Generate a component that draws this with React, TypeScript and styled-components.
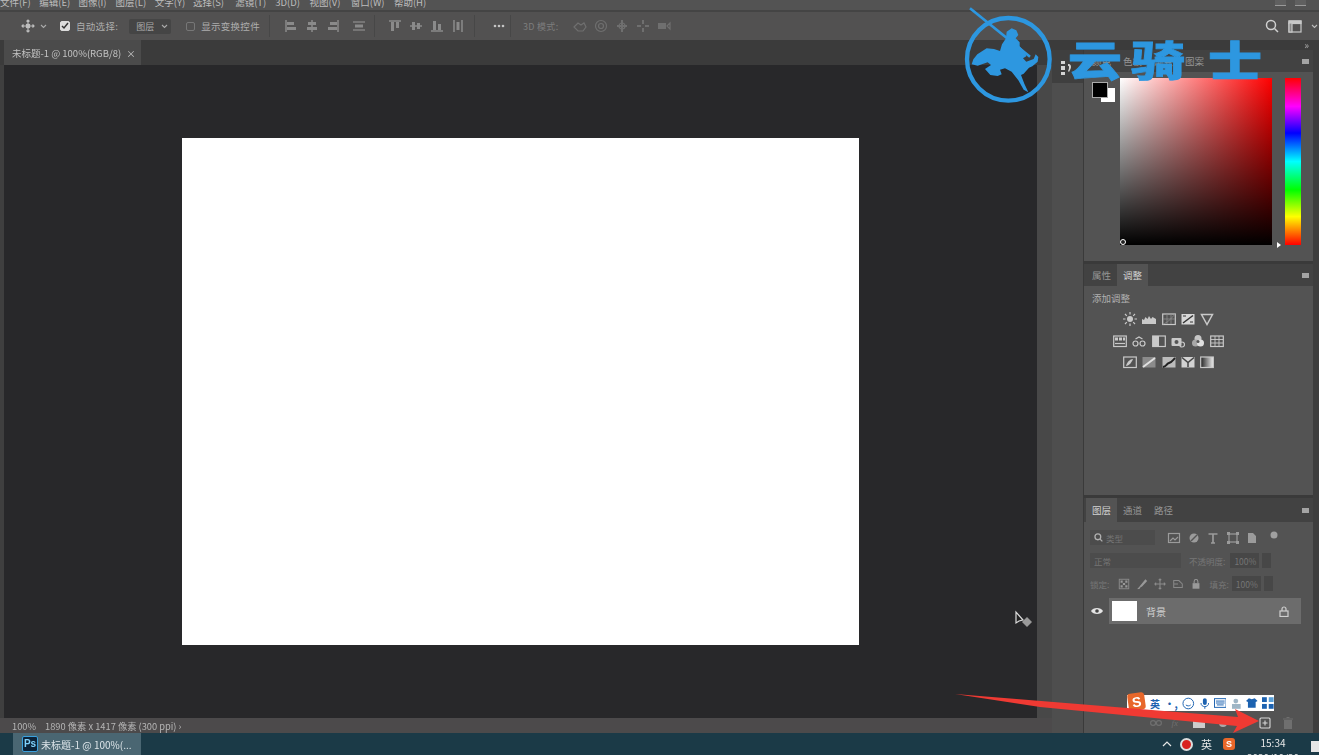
import React from "react";
import styled, { createGlobalStyle } from "styled-components";

const Global = createGlobalStyle`
  html, body { margin: 0; padding: 0; background: #28282a; overflow: hidden; }
  * { box-sizing: border-box; }
`;

const Shell = styled.div`
  position: relative;
  width: 1319px;
  height: 755px;
  display: flex;
  flex-direction: column;
  overflow: hidden;
  font-family: "Noto Sans CJK SC", "Liberation Sans", sans-serif;
  font-size: 9px;
  color: #c4c4c4;
`;
const Blurred = styled.div`
  display: flex;
  flex-direction: column;
  width: 100%;
  height: 100%;
  filter: blur(0.45px);
`;

/* menu */
const MenuBar = styled.div`
  height: 12px;
  flex: none;
  background: #535353;
  border-bottom: 2px solid #444;
  display: flex;
  align-items: flex-end;
  overflow: hidden;
  position: relative;
`;
const MenuItems = styled.div`
  display: flex;
  gap: 9.2px;
  height: 10px;
  line-height: 10px;
  margin-top: -3px;
  align-self: flex-start;
  font-size: 9.5px;
  color: #bdbdbd;
  white-space: nowrap;
`;
const MenuItem = styled.span<{ $w: number }>`
  width: ${(p) => p.$w}px;
`;
const WinBtns = styled.div`
  margin-left: auto;
  display: flex;
  gap: 9px;
  align-self: flex-start;
  padding-right: 13px;
`;
const WinBtn = styled.div`
  width: 11px;
  height: 6px;
  background: #606060;
  border-bottom: 1px solid #999;
`;

/* options */
const OptionsBar = styled.div`
  height: 28px;
  flex: none;
  background: #525151;
  display: flex;
  align-items: center;
  padding-left: 21px;
  color: #aaa;
  white-space: nowrap;
`;
const OptGroup = styled.div<{ $gap?: number; $left?: number }>`
  display: flex;
  align-items: center;
  gap: ${(p) => p.$gap ?? 8}px;
  margin-left: ${(p) => p.$left ?? 0}px;
`;
const Sep = styled.div<{ $left: number }>`
  width: 1px;
  height: 22px;
  background: #474747;
  margin-left: ${(p) => p.$left}px;
`;
const Check = styled.div<{ $on?: boolean }>`
  width: ${(p) => (p.$on ? 10 : 9)}px;
  height: ${(p) => (p.$on ? 10 : 9)}px;
  border-radius: 2px;
  background: ${(p) => (p.$on ? "#dcdcdc" : "transparent")};
  border: 1px solid ${(p) => (p.$on ? "#dcdcdc" : "#777")};
  display: flex;
  align-items: center;
  justify-content: center;
`;
const SelectBox = styled.div`
  width: 42px;
  height: 15px;
  background: #454545;
  border-radius: 2px;
  display: flex;
  align-items: center;
  justify-content: space-between;
  padding: 0 3px 0 7px;
  color: #aaa;
`;
const OptLabel = styled.span<{ $dim?: boolean }>`
  font-size: ${(p) => (p.$dim ? 9 : 9.5)}px;
  color: ${(p) => (p.$dim ? "#7d7d7d" : "#adadad")};
  letter-spacing: 0.3px;
`;
const RightTools = styled.div`
  margin-left: auto;
  display: flex;
  align-items: center;
  gap: 9px;
  padding-right: 1px;
`;
const WideIcon = styled.div`
  margin-left: 5px;
`;

/* workspace */
const Workspace = styled.div`
  flex: 1;
  display: flex;
  min-height: 0;
`;
const DocColumn = styled.div`
  width: 1052px;
  flex: none;
  display: flex;
  flex-direction: column;
`;
const TabRow = styled.div`
  height: 25px;
  flex: none;
  background: #3b3b3b;
  padding-left: 4px;
  display: flex;
`;
const DocTab = styled.div`
  width: 137px;
  background: #4b4b4b;
  display: flex;
  align-items: center;
  padding-left: 8px;
  gap: 5px;
  color: #c2c2c2;
  font-size: 9.5px;
  white-space: nowrap;
`;
const CanvasRow = styled.div`
  flex: 1;
  display: flex;
  min-height: 0;
`;
const CanvasArea = styled.div`
  flex: 1;
  background: #28282a;
  border-left: 4px solid #3f3f3f;
  padding: 73px 0 0 178px;
`;
const Page = styled.div`
  width: 677px;
  height: 507px;
  background: #fff;
`;
const VScroll = styled.div`
  width: 15px;
  background: #484848;
`;
const StatusBar = styled.div`
  height: 15px;
  flex: none;
  background: #4c4a4b;
  display: flex;
  align-items: center;
  padding-left: 12px;
  gap: 9px;
  color: #b5b5b5;
  white-space: nowrap;
  font-size: 9.3px;
`;

/* dock */
const Dock = styled.div`
  flex: 1;
  background: #3d3d3d;
  display: flex;
  flex-direction: column;
`;
const DockTop = styled.div`
  height: 10px;
  flex: none;
  background: #3b3b3b;
  display: flex;
  justify-content: flex-end;
  align-items: center;
  padding-right: 10px;
  color: #aaa;
  font-size: 10px;
  line-height: 10px;
`;
const DockBody = styled.div`
  flex: 1;
  display: flex;
  min-height: 0;
`;
const MiniCol = styled.div`
  width: 32px;
  background: #4e4e4e;
  border-right: 1px solid #3a3a3a;
  display: flex;
  flex-direction: column;
`;
const MiniHead = styled.div`
  height: 33px;
  flex: none;
  background: #3f3f3f;
  padding: 11px 0 0 9px;
`;
const Panels = styled.div`
  width: 229px;
  display: flex;
  flex-direction: column;
  gap: 3px;
  background: #3a3a3a;
`;
const Panel = styled.div<{ $h?: number }>`
  background: #535353;
  display: flex;
  flex-direction: column;
  ${(p) => (p.$h ? `height: ${p.$h}px; flex: none;` : "flex: 1;")}
`;
const PanelHead = styled.div<{ $h: number }>`
  height: ${(p) => p.$h}px;
  flex: none;
  background: #424242;
  display: flex;
  align-items: stretch;
  padding-left: 2px;
  position: relative;
`;
const PanelTab = styled.div<{ $on?: boolean }>`
  padding: 0 6px;
  display: flex;
  align-items: center;
  background: ${(p) => (p.$on ? "#535353" : "transparent")};
  color: ${(p) => (p.$on ? "#d2d2d2" : "#959595")};
  font-size: 9.5px;
`;
const PanelMenu = styled.div`
  margin-left: auto;
  align-self: center;
  margin-right: 4px;
  width: 7px;
  height: 5px;
  background: #a4a4a4;
`;

const ColorBody = styled.div`
  flex: 1;
  display: flex;
  padding: 6px 0 0 9px;
  position: relative;
`;
const Swatches = styled.div`
  position: relative;
  width: 27px;
  height: 28px;
  flex: none;
`;
const Bg = styled.div`
  position: absolute;
  left: 8px;
  top: 10px;
  width: 14px;
  height: 14px;
  background: #fff;
`;
const Fg = styled.div`
  position: absolute;
  left: 0;
  top: 5px;
  width: 14px;
  height: 14px;
  background: #000;
  outline: 1px solid #aaa;
`;
const Picker = styled.div`
  width: 152px;
  height: 167px;
  background:
    linear-gradient(to top, #000, rgba(0, 0, 0, 0)),
    linear-gradient(to right, #fff, #f00);
`;
const Hue = styled.div`
  width: 16px;
  height: 167px;
  margin-left: 13px;
  background: linear-gradient(
    to bottom,
    #f00 0%,
    #f0f 17%,
    #00f 33%,
    #0ff 50%,
    #0f0 67%,
    #ff0 83%,
    #f00 100%
  );
`;
const PickerMark = styled.div`
  position: absolute;
  left: 36px;
  top: 167px;
  width: 6px;
  height: 6px;
  border-radius: 50%;
  border: 1px solid #fff;
  background: #222;
`;
const HueMark = styled.div`
  position: absolute;
  left: 193px;
  top: 170px;
  width: 0;
  height: 0;
  border-top: 3px solid transparent;
  border-bottom: 3px solid transparent;
  border-left: 4px solid #fff;
`;

const AdjBody = styled.div`
  flex: 1;
  padding: 6px 8px;
`;
const AdjTitle = styled.div`
  color: #b0b0b0;
  font-size: 9.5px;
  line-height: 12px;
`;
const AdjGrid = styled.div`
  margin: 8px 0 0 18px;
  width: 117px;
  display: flex;
  flex-direction: column;
  gap: 7.5px;
`;
const AdjRow = styled.div`
  display: flex;
  justify-content: center;
  gap: 5.4px;
`;

const FilterRow = styled.div<{ $top?: number }>`
  height: 23px;
  flex: none;
  margin-top: ${(p) => p.$top ?? 0}px;
  display: flex;
  align-items: center;
  padding-left: 6px;
  color: #777;
  font-size: 8.5px;
  white-space: nowrap;
`;
const FieldBox = styled.div<{ $w: number; $left?: number; $deep?: boolean }>`
  width: ${(p) => p.$w}px;
  height: 15px;
  margin-left: ${(p) => p.$left ?? 0}px;
  background: ${(p) => (p.$deep ? "#474747" : "#4c4c4c")};
  display: flex;
  align-items: center;
  gap: 3px;
  padding: 0 4px;
  color: #757575;
  font-size: 8.5px;
`;
const FieldLabel = styled.span<{ $left?: number }>`
  margin-left: ${(p) => p.$left ?? 0}px;
  color: #777;
`;
const IconSet = styled.div<{ $left: number; $gap: number }>`
  display: flex;
  align-items: center;
  gap: ${(p) => p.$gap}px;
  margin-left: ${(p) => p.$left}px;
`;
const LayerRow = styled.div`
  height: 26px;
  flex: none;
  display: flex;
  align-items: center;
  margin-top: 3px;
`;
const EyeCell = styled.div`
  width: 25px;
  display: flex;
  justify-content: center;
`;
const LayerBody = styled.div`
  width: 192px;
  height: 26px;
  background: #6c6c6c;
  display: flex;
  align-items: center;
  padding: 0 12px 0 3px;
  color: #d0d0d0;
  font-size: 10px;
`;
const Thumb = styled.div`
  width: 25px;
  height: 20px;
  background: #fff;
  margin-right: 9px;
`;
const LayersFill = styled.div`
  flex: 1;
`;
const LayersFooter = styled.div`
  height: 21px;
  flex: none;
  display: flex;
  align-items: center;
  justify-content: flex-end;
  gap: 10px;
  padding-right: 20px;
  color: #777;
  font-size: 9px;
`;
const FxText = styled.span`
  font-style: italic;
  font-family: "Liberation Serif", serif;
  color: #6f6f6f;
`;

/* taskbar */
const Taskbar = styled.div`
  height: 22px;
  flex: none;
  background: #1b3a47;
  display: flex;
  align-items: stretch;
  padding-left: 13px;
`;
const TaskBtn = styled.div`
  width: 128px;
  background: #4a6672;
  display: flex;
  align-items: center;
  padding-left: 9px;
  gap: 3px;
  color: #dce4e8;
  font-size: 10px;
  white-space: nowrap;
  overflow: hidden;
`;
const PsIcon = styled.div`
  width: 16px;
  height: 16px;
  background: #0b2238;
  border: 1px solid #3aa0dd;
  border-radius: 2px;
  color: #7fd0fa;
  font: bold 10px/14px "Liberation Sans", sans-serif;
  text-align: center;
`;
const Tray = styled.div`
  margin-left: auto;
  display: flex;
  align-items: center;
  color: #e8e8e8;
  position: relative;
`;
const TrayRec = styled.div`
  width: 13px;
  height: 13px;
  border-radius: 50%;
  border: 2px solid #ddd;
  background: #d8201e;
  margin-left: 8px;
`;
const TrayLang = styled.span`
  font-size: 11px;
  margin-left: 8px;
`;
const TrayGap = styled.span`
  width: 11px;
`;
const SogouBadge = styled.div<{ $s: number }>`
  width: ${(p) => p.$s}px;
  height: ${(p) => p.$s}px;
  border-radius: 3px;
  background: #e8672a;
  color: #fff;
  font: bold ${(p) => p.$s - 3}px/1 "Liberation Sans", sans-serif;
  display: flex;
  align-items: center;
  justify-content: center;
  flex: none;
`;
const TrayClock = styled.div`
  width: 56px;
  margin-left: 10px;
  text-align: center;
  font-size: 10px;
  line-height: 15px;
  padding-top: 2px;
  align-self: flex-start;
  height: 22px;
  overflow: hidden;
`;
const TrayNote = styled.div`
  width: 8px;
  height: 11px;
  margin: 8px 0 0 10px;
  background: #e6e6e6;
  align-self: flex-start;
`;

/* overlays */
const Watermark = styled.div`
  position: absolute;
  left: 950px;
  top: 0;
  display: flex;
  align-items: flex-start;
`;
const WatermarkText = styled.div`
  position: absolute;
  left: 114px;
  top: 36px;
  display: flex;
  color: #2d97e0;
  font: 900 54px/58px "Noto Sans CJK SC", sans-serif;
  -webkit-text-stroke: 1px #2d97e0;
  white-space: nowrap;
  transform: scaleY(0.76);
  transform-origin: top left;
`;
const WatermarkChar = styled.span<{ $w: number }>`
  width: ${(p) => p.$w}px;
  text-align: center;
`;
const SogouBar = styled.div`
  position: absolute;
  left: 1127px;
  top: 695px;
  width: 147px;
  height: 16px;
  background: #fff;
  display: flex;
  align-items: center;
  padding-left: 23px;
  gap: 4.6px;
  color: #1c62b0;
  font-size: 10px;
  font-weight: 700;
`;
const SogouLogo = styled.div`
  position: absolute;
  left: 1128px;
  top: 693px;
  transform: rotate(-8deg);
`;
const Arrow = styled.svg`
  position: absolute;
  left: 950px;
  top: 690px;
`;
const Cursor = styled.svg`
  position: absolute;
  left: 1012px;
  top: 608px;
`;

/* icons */
const Svg = ({ s = 14, c = "#bdbdbd", children }: { s?: number; c?: string; children: React.ReactNode }) => (
  <svg width={s} height={s} viewBox="0 0 14 14" fill="none" stroke={c} strokeWidth="1.2" style={{ flex: "none", display: "block" }}>
    {children}
  </svg>
);
const Caret = ({ c = "#aaa" }: { c?: string }) => (
  <svg width="7" height="5" viewBox="0 0 7 5" fill="none" stroke={c} strokeWidth="1.1" style={{ flex: "none" }}>
    <path d="M1 1l2.5 2.5L6 1" />
  </svg>
);

const MoveIcon = () => (
  <Svg s={14}>
    <path d="M7 1v12M1 7h12M5.500 2.500L7 1l1.500 1.500M5.500 11.500L7 13l1.500-1.500M2.500 5.500L1 7l1.500 1.500M11.500 5.500L13 7l-1.500 1.500" />
    <rect x="5.500" y="5.500" width="3" height="3" fill="#bdbdbd" />
  </Svg>
);
const alignA = [
  <><path d="M2 1v12" /><rect x="3" y="3" width="7" height="3" fill="#8a8a8a" stroke="none" /><rect x="3" y="8" width="9" height="3" fill="#8a8a8a" stroke="none" /></>,
  <><path d="M7 1v12" /><rect x="3" y="3" width="8" height="3" fill="#8a8a8a" stroke="none" /><rect x="2" y="8" width="10" height="3" fill="#8a8a8a" stroke="none" /></>,
  <><path d="M12 1v12" /><rect x="4" y="3" width="7" height="3" fill="#8a8a8a" stroke="none" /><rect x="2" y="8" width="9" height="3" fill="#8a8a8a" stroke="none" /></>,
];
const alignSpread = <><path d="M1 3h12M1 11h12" /><rect x="3" y="5.500" width="8" height="3" fill="#8a8a8a" stroke="none" /></>;
const alignB = [
  <><path d="M1 2h12" /><rect x="3" y="3" width="3" height="9" fill="#8a8a8a" stroke="none" /><rect x="8" y="3" width="3" height="6" fill="#8a8a8a" stroke="none" /></>,
  <><path d="M1 7h12" /><rect x="3" y="3" width="3" height="8" fill="#8a8a8a" stroke="none" /><rect x="8" y="4" width="3" height="6" fill="#8a8a8a" stroke="none" /></>,
  <><path d="M1 12h12" /><rect x="3" y="2" width="3" height="9" fill="#8a8a8a" stroke="none" /><rect x="8" y="5" width="3" height="6" fill="#8a8a8a" stroke="none" /></>,
  <><path d="M3 1v12M11 1v12" /><rect x="5.500" y="3" width="3" height="8" fill="#8a8a8a" stroke="none" /></>,
];
const dim = "#6f6f6f";
const threeD = [
  <path d="M1 8l4-4 3 2 3-2 2 4-3 4H5z" stroke={dim} />,
  <><circle cx="7" cy="7" r="5.500" stroke={dim} /><circle cx="7" cy="7" r="2.500" stroke={dim} /></>,
  <><path d="M7 1v12M2 7h10" stroke={dim} strokeWidth="2" /><circle cx="7" cy="7" r="3" stroke={dim} /></>,
  <path d="M7 1v4M7 9v4M1 7h4M9 7h4" stroke={dim} strokeWidth="2" />,
  <><rect x="1" y="4" width="8" height="6" fill={dim} stroke="none" /><path d="M10 7l3-3v6z" stroke={dim} /></>,
];

const adj = (n: number) => {
  const w = "#c9c9c9";
  const boxed = (inner: React.ReactNode) => (
    <><rect x="0.700" y="2" width="12.600" height="10.500" stroke={w} />{inner}</>
  );
  const all: React.ReactNode[] = [
    <><circle cx="7" cy="7" r="3" fill={w} stroke="none" /><path d="M7 0v2.500M7 11.500V14M0 7h2.500M11.500 7H14M2 2l1.800 1.800M10.200 10.200L12 12M2 12l1.800-1.800M10.200 3.800L12 2" stroke={w} /></>,
    <path d="M0 12V7l2 1 1.500-3 2 2 1.500-3 2 3 1.500-2L14 7v5z" fill={w} stroke="none" />,
    boxed(<path d="M1 12C5 11 9 7 13 2M5 2v10M9 2v10M1 7h12" stroke="#8d8d8d" strokeWidth="0.8" />),
    <><rect x="0.500" y="2" width="13" height="10.500" fill="#d8d8d8" stroke="none" /><path d="M2 11L12 3.500" stroke="#333" strokeWidth="1.500" /><path d="M2 4h3M9 10h3" stroke="#333" /></>,
    <path d="M1.500 2.500h11L7 12.500z" stroke={w} strokeWidth="1.500" />,
    boxed(<><rect x="2" y="3.500" width="3" height="3" fill={w} stroke="none" /><rect x="6" y="3.500" width="3" height="3" fill={w} stroke="none" /><rect x="10" y="3.500" width="2" height="3" fill={w} stroke="none" /><path d="M2 9.500h10" stroke={w} /></>),
    <><circle cx="3.500" cy="9.500" r="2.500" stroke={w} /><circle cx="10.500" cy="9.500" r="2.500" stroke={w} /><path d="M3.500 5l3.500-2 3.500 2" stroke={w} /></>,
    <><rect x="0.700" y="2" width="12.600" height="10.500" stroke={w} /><rect x="0.700" y="2" width="6.300" height="10.500" fill={w} stroke="none" /></>,
    <><rect x="0.500" y="4" width="10" height="8" rx="1" fill={w} stroke="none" /><circle cx="5.500" cy="8" r="2" fill="#555" stroke="none" /><circle cx="11" cy="10.500" r="2.500" stroke={w} /></>,
    <><circle cx="7" cy="4.500" r="3.500" fill="#c6c6c6" stroke="none" /><circle cx="4.500" cy="9" r="3.500" fill="#a8a8a8" stroke="none" /><circle cx="9.500" cy="9" r="3.500" fill="#e0e0e0" stroke="none" /><circle cx="7" cy="7.500" r="1.500" fill="#555" stroke="none" /></>,
    boxed(<path d="M5 2v10.500M9 2v10.500M1 5.500h12M1 9h12" stroke={w} strokeWidth="0.900" />),
    <><rect x="0.700" y="2" width="12.600" height="10.500" stroke={w} /><path d="M3 11c3 0 6-4 7-7-3 0-6 3-7 7z" fill={w} stroke="none" /></>,
    <><rect x="0.500" y="2" width="13" height="10.500" fill="#8b8b8b" stroke="none" /><path d="M1 12L13 3" stroke="#e0e0e0" strokeWidth="2" /></>,
    <><rect x="0.500" y="2" width="13" height="10.500" fill="#bcbcbc" stroke="none" /><path d="M1 12c4-1 3-3 6-4s4-3 6-5" stroke="#222" strokeWidth="2" /></>,
    <><rect x="0.500" y="2" width="13" height="10.500" fill="#d2d2d2" stroke="none" /><path d="M1 2.500l6 5 6-5M7 7.500V12" stroke="#444" strokeWidth="1.500" /></>,
    <><defs><linearGradient id="adjg"><stop offset="0" stopColor="#222" /><stop offset="1" stopColor="#eee" /></linearGradient></defs><rect x="0.700" y="2" width="12.600" height="10.500" fill="url(#adjg)" stroke={w} /></>,
  ];
  return all[n];
};

const l = "#9b9b9b";
const filterIcons = [
  <><rect x="1.500" y="2.500" width="11" height="9" stroke={l} /><path d="M3 10l3-3 2 2 3-3" stroke={l} /></>,
  <><circle cx="7" cy="7" r="4.500" fill={l} stroke="none" /><path d="M4 10l6-6" stroke="#555" strokeWidth="1.500" /></>,
  <path d="M2.500 3h9M7 3v9M5 12h4" stroke={l} strokeWidth="1.700" />,
  <><rect x="3" y="3" width="8" height="8" stroke={l} /><path d="M1 1h3v3H1zM10 1h3v3h-3zM1 10h3v3H1zM10 10h3v3h-3z" fill={l} stroke="none" /></>,
  <path d="M3 2h5l3 3v7H3z M6 6h3v3H6z" fill={l} stroke="none" />,
];
const lockIcons = [
  <><rect x="1.500" y="1.500" width="11" height="11" stroke="#888" /><path d="M3 3h2.500v2.500H3zM8.500 3H11v2.500H8.500zM5.700 5.700h2.600v2.600H5.700zM3 8.500h2.500V11H3zM8.500 8.500H11V11H8.500z" fill="#999" stroke="none" /></>,
  <path d="M2 12.500c2 0 2.500-1 3-2.500L11 2.500l1 1L6 10" stroke="#999" strokeWidth="1.500" />,
  <path d="M7 1v12M1 7h12M5.500 2.500L7 1l1.500 1.500M5.500 11.500L7 13l1.500-1.500M2.500 5.500L1 7l1.500 1.500M11.500 5.500L13 7l-1.500 1.500" stroke="#8b8b8b" />,
  <path d="M2 3h6l4 4v4H2z M2 7h5" stroke="#888" />,
  <><rect x="3" y="6" width="8" height="6.500" fill="#999" stroke="none" /><path d="M4.800 6V4a2.200 2.200 0 0 1 4.400 0v2" stroke="#999" /></>,
];

const menu: [string, number][] = [
  ["文件(F)", 30], ["编辑(E)", 30], ["图像(I)", 28], ["图层(L)", 30], ["文字(Y)", 29],
  ["选择(S)", 33], ["滤镜(T)", 31], ["3D(D)", 25], ["视图(V)", 32], ["窗口(W)", 34], ["帮助(H)", 33],
];

export default function App() {
  return (
    <Shell>
      <Global />
      <Blurred>
        <MenuBar>
          <MenuItems>
            {menu.map(([t, w]) => (
              <MenuItem key={t} $w={w}>{t}</MenuItem>
            ))}
          </MenuItems>
          <WinBtns>
            <WinBtn />
            <WinBtn />
          </WinBtns>
        </MenuBar>

        <OptionsBar>
          <MoveIcon />
          <OptGroup $left={5}><Caret /></OptGroup>
          <OptGroup $left={13} $gap={6}>
            <Check $on><svg width="8" height="8" viewBox="0 0 8 8" fill="none" stroke="#333" strokeWidth="1.500"><path d="M1 4l2 2 4-5" /></svg></Check>
            <OptLabel>自动选择:</OptLabel>
          </OptGroup>
          <OptGroup $left={11}>
            <SelectBox>图层<Caret /></SelectBox>
          </OptGroup>
          <OptGroup $left={15} $gap={6}>
            <Check />
            <OptLabel>显示变换控件</OptLabel>
          </OptGroup>
          <Sep $left={9} />
          <OptGroup $left={14} $gap={7}>
            {alignA.map((a, i) => <Svg key={i} c="#9a9a9a">{a}</Svg>)}
            <WideIcon><Svg c="#9a9a9a">{alignSpread}</Svg></WideIcon>
          </OptGroup>
          <Sep $left={8} />
          <OptGroup $left={13} $gap={7}>
            {alignB.map((a, i) => <Svg key={i} c="#9a9a9a">{a}</Svg>)}
          </OptGroup>
          <Sep $left={9} />
          <OptGroup $left={18} $gap={3}>
            <svg width="12" height="4" viewBox="0 0 12 4" fill="#c4c4c4"><circle cx="2" cy="2" r="1.300" /><circle cx="6" cy="2" r="1.300" /><circle cx="10" cy="2" r="1.300" /></svg>
          </OptGroup>
          <Sep $left={5} />
          <OptGroup $left={12}>
            <OptLabel $dim>3D 模式:</OptLabel>
          </OptGroup>
          <OptGroup $left={15} $gap={7}>
            {threeD.map((a, i) => <Svg key={i} c={dim}>{a}</Svg>)}
          </OptGroup>
          <RightTools>
            <svg width="14" height="14" viewBox="0 0 14 14" fill="none" stroke="#d0d0d0" strokeWidth="1.500"><circle cx="6" cy="6" r="4.500" /><path d="M9.500 9.500L13 13" /></svg>
            <svg width="14" height="13" viewBox="0 0 14 13" fill="none" stroke="#c8c8c8" strokeWidth="1.200"><rect x="1" y="1" width="12" height="11" /><rect x="1" y="1" width="12" height="2.500" fill="#c8c8c8" /><rect x="1" y="3" width="3" height="9" fill="#888" /></svg>
            <Caret c="#bbb" />
          </RightTools>
        </OptionsBar>

        <Workspace>
          <DocColumn>
            <TabRow>
              <DocTab>
                <span>未标题-1 @ 100%(RGB/8)</span>
                <span>×</span>
              </DocTab>
            </TabRow>
            <CanvasRow>
              <CanvasArea>
                <Page />
              </CanvasArea>
              <VScroll />
            </CanvasRow>
            <StatusBar>
              <span>100%</span>
              <span>1890 像素 x 1417 像素 (300 ppi) ›</span>
            </StatusBar>
          </DocColumn>

          <Dock>
            <DockTop>»</DockTop>
            <DockBody>
              <MiniCol>
                <MiniHead>
                  <svg width="12" height="15" viewBox="0 0 12 15" fill="#d4d4d4"><rect x="0" y="0" width="4" height="3" /><rect x="0" y="5" width="4" height="4" /><rect x="0" y="11" width="4" height="3" /><path d="M7 3c3 0 3 2 3 3s-1 3-2 5l-1-1c1-2 1-3 1-4s0-1-1-1z" /></svg>
                </MiniHead>
              </MiniCol>
              <Panels>
                <Panel $h={211}>
                  <PanelHead $h={22}>
                    <PanelTab>颜色</PanelTab>
                    <PanelTab>色板</PanelTab>
                    <PanelTab>渐变</PanelTab>
                    <PanelTab>图案</PanelTab>
                    <PanelMenu />
                  </PanelHead>
                  <ColorBody>
                    <Swatches><Bg /><Fg /></Swatches>
                    <Picker />
                    <Hue />
                    <PickerMark />
                    <HueMark />
                  </ColorBody>
                </Panel>
                <Panel $h={231}>
                  <PanelHead $h={22}>
                    <PanelTab>属性</PanelTab>
                    <PanelTab $on>调整</PanelTab>
                    <PanelMenu />
                  </PanelHead>
                  <AdjBody>
                    <AdjTitle>添加调整</AdjTitle>
                    <AdjGrid>
                      {[[0, 5], [5, 11], [11, 16]].map(([a, b]) => (
                        <AdjRow key={a}>
                          {Array.from({ length: b - a }, (_, i) => (
                            <Svg key={i}>{adj(a + i)}</Svg>
                          ))}
                        </AdjRow>
                      ))}
                    </AdjGrid>
                  </AdjBody>
                </Panel>
                <Panel>
                  <PanelHead $h={24}>
                    <PanelTab $on>图层</PanelTab>
                    <PanelTab>通道</PanelTab>
                    <PanelTab>路径</PanelTab>
                    <PanelMenu />
                  </PanelHead>
                  <FilterRow $top={4}>
                    <FieldBox $w={65}>
                      <svg width="9" height="9" viewBox="0 0 14 14" fill="none" stroke="#b0b0b0" strokeWidth="2"><circle cx="6" cy="6" r="4.500" /><path d="M9.500 9.500L13 13" /></svg>
                      类型
                    </FieldBox>
                    <IconSet $left={12} $gap={5.500}>
                      {filterIcons.map((a, i) => <Svg key={i} s={14} c={l}>{a}</Svg>)}
                      <svg width="8" height="8" viewBox="0 0 8 8" style={{ marginLeft: 5, marginTop: -6 }}><circle cx="4" cy="4" r="3.500" fill="#a0a0a0" /></svg>
                    </IconSet>
                  </FilterRow>
                  <FilterRow>
                    <FieldBox $w={91}>正常</FieldBox>
                    <FieldLabel $left={8}>不透明度:</FieldLabel>
                    <FieldBox $w={29} $left={5} $deep>100%</FieldBox>
                    <FieldBox $w={9} $left={3} $deep />
                  </FilterRow>
                  <FilterRow>
                    <FieldLabel>锁定:</FieldLabel>
                    <IconSet $left={9} $gap={6}>
                      {lockIcons.map((a, i) => <Svg key={i} s={12}>{a}</Svg>)}
                    </IconSet>
                    <FieldLabel $left={7}>填充:</FieldLabel>
                    <FieldBox $w={29} $left={3} $deep>100%</FieldBox>
                    <FieldBox $w={9} $left={3} $deep />
                  </FilterRow>
                  <LayerRow>
                    <EyeCell>
                      <svg width="12" height="8" viewBox="0 0 12 8"><path d="M0 4c2-4 10-4 12 0-2 4-10 4-12 0z" fill="#e4e4e4" /><circle cx="6" cy="4" r="1.800" fill="#444" /></svg>
                    </EyeCell>
                    <LayerBody>
                      <Thumb />
                      背景
                      <svg width="10" height="11" viewBox="0 0 10 11" fill="none" stroke="#cfcfcf" strokeWidth="1.200" style={{ marginLeft: "auto" }}><rect x="1" y="5" width="8" height="5.500" /><path d="M3 5V3a2 2 0 0 1 4 0v2" /></svg>
                    </LayerBody>
                  </LayerRow>
                  <LayersFill />
                  <LayersFooter>
                    <svg width="12" height="6" viewBox="0 0 12 6" fill="none" stroke="#6f6f6f" strokeWidth="1.200"><rect x="0.600" y="0.600" width="5" height="4.800" rx="2.400" /><rect x="6.400" y="0.600" width="5" height="4.800" rx="2.400" /></svg>
                    <FxText>fx</FxText>
                    <svg width="12" height="10" viewBox="0 0 12 10" style={{ marginLeft: 5 }}><rect width="12" height="10" fill="#ccc" /></svg>
                    <svg width="12" height="10" viewBox="0 0 12 10" style={{ marginLeft: 2 }}><circle cx="6" cy="5" r="4" fill="#aaa" /></svg>
                    <svg width="12" height="12" viewBox="0 0 12 12" fill="none" stroke="#d8d8d8" strokeWidth="1.100" style={{ marginLeft: 20 }}><rect x="1" y="1" width="10" height="10" rx="1" /><path d="M6 3.500v5M3.500 6h5" /></svg>
                    <svg width="10" height="12" viewBox="0 0 10 12" fill="#6f6f6f" style={{ marginLeft: 2 }}><path d="M1 3h8v9H1zM0 1.500h10v1H0zM3.500 0h3v1h-3z" /></svg>
                  </LayersFooter>
                </Panel>
              </Panels>
            </DockBody>
          </Dock>
        </Workspace>

        <Taskbar>
          <TaskBtn>
            <PsIcon>Ps</PsIcon>
            <span>未标题-1 @ 100%(...</span>
          </TaskBtn>
          <Tray>
            <svg width="10" height="6" viewBox="0 0 10 6" fill="none" stroke="#e8e8e8" strokeWidth="1.200"><path d="M1 5l4-4 4 4" /></svg>
            <TrayRec />
            <TrayLang>英</TrayLang>
            <TrayGap />
            <SogouBadge $s={12}>S</SogouBadge>
            <TrayClock>
              15:34
              <br />
              2020/10/20
            </TrayClock>
            <TrayNote />
          </Tray>
        </Taskbar>
      </Blurred>

      <Cursor width="24" height="24" viewBox="0 0 24 24">
        <path d="M4 4v11l3-2 4-1z" fill="#222" stroke="#ddd" strokeWidth="1.200" />
        <path d="M15 9l5 5-5 5-5-5z" fill="#9a9a9a" />
      </Cursor>

      <Watermark>
        <svg width="110" height="105" viewBox="0 0 330 315" fill="#2d97e0">
          <circle cx="175" cy="178" r="124" fill="none" stroke="#2d97e0" strokeWidth="13" />
          <path d="M60 25L240 170" stroke="#2d97e0" strokeWidth="8" fill="none" />
          <path d="M70 178l12-15 28-18 22 2 18 6 6-20 12-18 2-20 15-10 14 6 6 14-8 10 12 12 0 12 16 18 4 12-10 6 10 10 22-8 6-14 8 8-2 14-16 14-10 4-16 18-8 4 10 26 12 26-14-8-16-28-20-26-20-10-15 4 5 14-12 5-22-3-16-18 18-12-10-8-30 10-18-4z" />
        </svg>
        <WatermarkText>
          <WatermarkChar $w={62}>云</WatermarkChar>
          <WatermarkChar $w={64}>骑</WatermarkChar>
          <WatermarkChar $w={90}>士</WatermarkChar>
        </WatermarkText>
      </Watermark>

      <SogouBar>
        <span>英</span>
        <span>•,</span>
        <svg width="13" height="13" viewBox="0 0 13 13" fill="none" stroke="#1c62b0"><circle cx="6.500" cy="6.500" r="5.500" /><path d="M4 8c1.500 1.300 3.500 1.300 5 0" /></svg>
        <svg width="10" height="13" viewBox="0 0 10 13" fill="#1c62b0"><rect x="3" y="1" width="4" height="7" rx="2" /><path d="M1 6c0 5 8 5 8 0M5 10v2" fill="none" stroke="#1c62b0" /></svg>
        <svg width="13" height="10" viewBox="0 0 13 10" fill="none" stroke="#1c62b0"><rect x="0.500" y="0.500" width="12" height="9" /><path d="M2 3h9M2 5h9M3 7h7" /></svg>
        <svg width="11" height="13" viewBox="0 0 11 13" fill="#9fb6c6"><circle cx="5" cy="4" r="2.500" /><rect x="1" y="7" width="9" height="5" /></svg>
        <svg width="12" height="12" viewBox="0 0 12 12" fill="#1c62b0"><path d="M3 1l3 1 3-1 3 3-2 1v6H2V5L0 4z" /></svg>
        <svg width="12" height="12" viewBox="0 0 12 12" fill="#1c62b0"><rect width="5" height="5" /><rect x="7" width="5" height="5" fill="#5aa0d8" /><rect y="7" width="5" height="5" /><rect x="7" y="7" width="5" height="5" /></svg>
      </SogouBar>
      <SogouLogo><SogouBadge $s={17}>S</SogouBadge></SogouLogo>

      <Arrow width="320" height="55" viewBox="0 0 320 55">
        <path d="M5 4L288 27l-3-8 24 12-26 12 4-7L90 17z" fill="#ef3a33" />
      </Arrow>
    </Shell>
  );
}
